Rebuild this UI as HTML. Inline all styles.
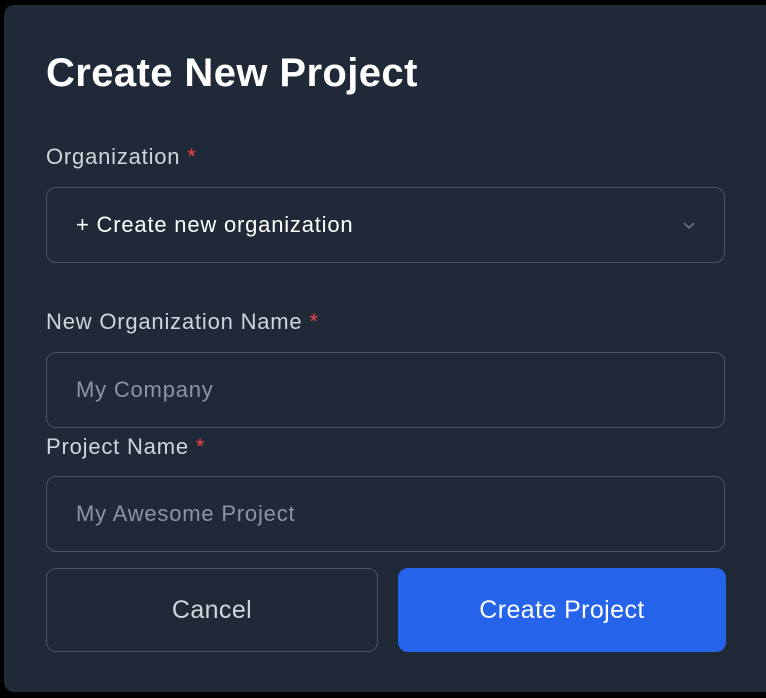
<!DOCTYPE html>
<html><head><style>
body{margin:0;background:#000;width:766px;height:698px;overflow:hidden;font-family:"Liberation Sans",sans-serif;}
.p{position:absolute;left:4px;top:5px;width:770px;height:687px;background:#1f2937;border-radius:10px;}
h1{position:absolute;left:46px;top:51px;margin:0;font-size:40px;font-weight:bold;color:#fff;letter-spacing:0.4px;}
.l{position:absolute;left:46px;font-size:22px;color:#d1d5db;letter-spacing:0.8px;}
.l span{color:#ef4444;}
.i{position:absolute;left:46px;height:74px;border:1.5px solid #475569;border-radius:10px;box-sizing:content-box;font-size:22px;line-height:74px;padding-left:29px;width:648px;letter-spacing:0.8px;}
.b{position:absolute;top:568px;height:84px;border-radius:10px;font-size:25px;text-align:center;line-height:82px;box-sizing:border-box;letter-spacing:0.4px;}
</style></head><body>
<div class="p"></div>
<h1>Create New Project</h1>
<div class="l" style="top:144px">Organization <span>*</span></div>
<div class="i" style="top:187px;color:#fff">+ Create new organization
<svg style="position:absolute;right:28px;top:33px" width="14" height="10" viewBox="0 0 14 10"><path d="M2 2l5 5 5-5" stroke="#6b7280" stroke-width="1.6" fill="none"/></svg></div>
<div class="l" style="top:309px">New Organization Name <span>*</span></div>
<div class="i" style="top:352px;color:#8b95a5">My Company</div>
<div class="l" style="top:434px">Project Name <span>*</span></div>
<div class="i" style="top:476px;color:#8b95a5">My Awesome Project</div>
<div class="b" style="left:46px;width:332px;border:1.5px solid #475569;color:#d1d5db">Cancel</div>
<div class="b" style="left:398px;width:328px;background:#2563eb;color:#fff;line-height:84px">Create Project</div>
</body></html>
